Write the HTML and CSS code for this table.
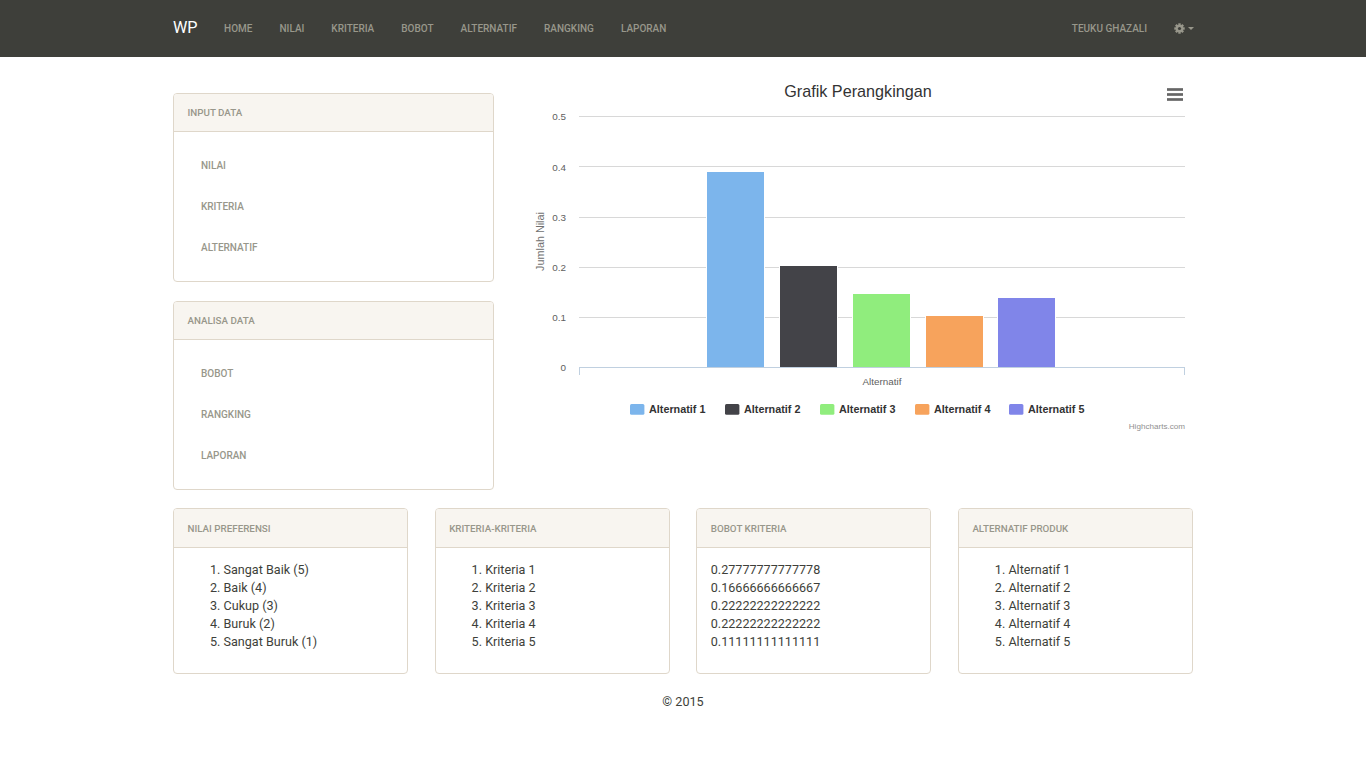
FILE: index.html
```html
<!DOCTYPE html>
<html lang="id">
<head>
<meta charset="utf-8">
<title>WP</title>
<link rel="stylesheet" href="styles.css">
</head>
<body>
<nav class="navbar">
  <div class="navbar-inner">
    <a class="brand" href="#">WP</a>
    <ul class="nav">
      <li><a href="#">Home</a></li>
      <li><a href="#">Nilai</a></li>
      <li><a href="#">Kriteria</a></li>
      <li><a href="#">Bobot</a></li>
      <li><a href="#">Alternatif</a></li>
      <li><a href="#">Rangking</a></li>
      <li><a href="#">Laporan</a></li>
    </ul>
    <ul class="nav nav-right">
      <li><a href="#">Teuku Ghazali</a></li>
      <li><a href="#" class="gear-link"><svg class="gear" width="11" height="11" viewBox="-5.5 -5.5 11 11"><g fill="#98978b"><circle r="3.7"/><rect x="-1.2" y="-5.2" width="2.4" height="10.4"/><rect x="-1.2" y="-5.2" width="2.4" height="10.4" transform="rotate(45)"/><rect x="-1.2" y="-5.2" width="2.4" height="10.4" transform="rotate(90)"/><rect x="-1.2" y="-5.2" width="2.4" height="10.4" transform="rotate(135)"/></g><circle r="1.6" fill="#3e3f3a"/></svg><span class="caret"></span></a></li>
    </ul>
  </div>
</nav>

<div class="main">
  <div class="top-row">
    <div class="sidebar">
      <div class="panel">
        <div class="panel-heading">Input Data</div>
        <div class="side-body">
          <a class="side-link" href="#">Nilai</a>
          <a class="side-link" href="#">Kriteria</a>
          <a class="side-link" href="#">Alternatif</a>
        </div>
      </div>
      <div class="panel panel-last">
        <div class="panel-heading">Analisa Data</div>
        <div class="side-body">
          <a class="side-link" href="#">Bobot</a>
          <a class="side-link" href="#">Rangking</a>
          <a class="side-link" href="#">Laporan</a>
        </div>
      </div>
    </div>
    <div class="chart-col">
      <svg class="chart" width="670" height="360" viewBox="0 0 670 360">
        <text x="335" y="22" text-anchor="middle" class="c-title">Grafik Perangkingan</text>
        <g stroke="#666" stroke-width="2.7">
          <line x1="644" y1="14.5" x2="660" y2="14.5"/>
          <line x1="644" y1="19.5" x2="660" y2="19.5"/>
          <line x1="644" y1="24.5" x2="660" y2="24.5"/>
        </g>
        <g stroke="#d8d8d8" stroke-width="1">
          <line x1="56" y1="41.5" x2="662" y2="41.5"/>
          <line x1="56" y1="91.5" x2="662" y2="91.5"/>
          <line x1="56" y1="142.5" x2="662" y2="142.5"/>
          <line x1="56" y1="192.5" x2="662" y2="192.5"/>
          <line x1="56" y1="242.5" x2="662" y2="242.5"/>
        </g>
        <g class="c-ylab" text-anchor="end">
          <text x="43" y="45">0.5</text>
          <text x="43" y="95.5">0.4</text>
          <text x="43" y="146">0.3</text>
          <text x="43" y="196">0.2</text>
          <text x="43" y="246">0.1</text>
          <text x="43" y="296">0</text>
        </g>
        <text class="c-ytitle" text-anchor="middle" transform="translate(21,166.5) rotate(-90)">Jumlah Nilai</text>
        <g stroke="#fff" stroke-width="1">
          <rect x="183.5" y="96.5" width="58" height="196" fill="#7cb5ec"/>
          <rect x="256.5" y="190.5" width="58" height="102" fill="#434348"/>
          <rect x="329.5" y="218.5" width="58" height="74" fill="#90ed7d"/>
          <rect x="402.5" y="240.5" width="58" height="52" fill="#f7a35c"/>
          <rect x="474.5" y="222.5" width="58" height="70" fill="#8085e9"/>
        </g>
        <g stroke="#c0d0e0" stroke-width="1">
          <line x1="56" y1="292.5" x2="662" y2="292.5"/>
          <line x1="56.5" y1="292.5" x2="56.5" y2="300"/>
          <line x1="661.5" y1="292.5" x2="661.5" y2="300"/>
        </g>
        <text x="359" y="309.5" text-anchor="middle" class="c-xlab">Alternatif</text>
        <g class="c-legend">
          <rect x="107" y="329" width="14.4" height="10.8" rx="1.5" fill="#7cb5ec"/>
          <text x="126" y="338">Alternatif 1</text>
          <rect x="202" y="329" width="14.4" height="10.8" rx="1.5" fill="#434348"/>
          <text x="221" y="338">Alternatif 2</text>
          <rect x="297" y="329" width="14.4" height="10.8" rx="1.5" fill="#90ed7d"/>
          <text x="316" y="338">Alternatif 3</text>
          <rect x="392" y="329" width="14.4" height="10.8" rx="1.5" fill="#f7a35c"/>
          <text x="411" y="338">Alternatif 4</text>
          <rect x="486" y="329" width="14.4" height="10.8" rx="1.5" fill="#8085e9"/>
          <text x="505" y="338">Alternatif 5</text>
        </g>
        <text x="662" y="354" text-anchor="end" class="c-credits">Highcharts.com</text>
      </svg>
    </div>
  </div>

  <div class="bottom-row">
    <div class="panel">
      <div class="panel-heading">Nilai Preferensi</div>
      <div class="list-body">
        <ol>
          <li>Sangat Baik (5)</li>
          <li>Baik (4)</li>
          <li>Cukup (3)</li>
          <li>Buruk (2)</li>
          <li>Sangat Buruk (1)</li>
        </ol>
      </div>
    </div>
    <div class="panel">
      <div class="panel-heading">Kriteria-Kriteria</div>
      <div class="list-body">
        <ol>
          <li>Kriteria 1</li>
          <li>Kriteria 2</li>
          <li>Kriteria 3</li>
          <li>Kriteria 4</li>
          <li>Kriteria 5</li>
        </ol>
      </div>
    </div>
    <div class="panel">
      <div class="panel-heading">Bobot Kriteria</div>
      <div class="list-body">
        <p class="plain">0.27777777777778<br>0.16666666666667<br>0.22222222222222<br>0.22222222222222<br>0.11111111111111</p>
      </div>
    </div>
    <div class="panel">
      <div class="panel-heading">Alternatif Produk</div>
      <div class="list-body">
        <ol>
          <li>Alternatif 1</li>
          <li>Alternatif 2</li>
          <li>Alternatif 3</li>
          <li>Alternatif 4</li>
          <li>Alternatif 5</li>
        </ol>
      </div>
    </div>
  </div>

  <footer class="footer">© 2015</footer>
</div>
</body>
</html>
```

FILE: styles.css
```css
* { box-sizing: border-box; }

body {
  margin: 0;
  font-family: Roboto, "Liberation Sans", Arial, sans-serif;
  font-size: 12.6px;
  line-height: 18px;
  color: #3e3f3a;
  background: #fff;
}

a { text-decoration: none; }

.navbar {
  background: #3e3f3a;
  height: 57px;
}

.navbar-inner {
  width: 1020px;
  height: 100%;
  margin: 0 auto;
  display: flex;
  align-items: flex-start;
}

.brand {
  color: #fff;
  font-size: 16.2px;
  line-height: 55px;
  padding-right: 13px;
}

.nav {
  display: flex;
  list-style: none;
  margin: 0;
  padding: 0;
}

.nav a {
  display: flex;
  align-items: center;
  height: 57px;
  padding: 0 13.5px;
  font-size: 10px;
  font-weight: 500;
  color: #98978b;
  text-transform: uppercase;
}

.nav-right {
  margin-left: auto;
  margin-right: -14.5px;
}

.gear { display: block; }

.caret {
  display: inline-block;
  margin-left: 3px;
  width: 0;
  height: 0;
  border-top: 3px solid #98978b;
  border-left: 3px solid transparent;
  border-right: 3px solid transparent;
}

.main {
  width: 1020px;
  margin: 18px auto 0;
}

.top-row {
  display: grid;
  grid-template-columns: 321px 670px;
  column-gap: 29px;
}

.sidebar { padding-top: 18px; }

.panel {
  border: 1px solid #dfd7ca;
  border-radius: 4px;
  margin-bottom: 19px;
  background: #fff;
}

.panel-last { margin-bottom: 18px; }

.panel-heading {
  background: #f8f5f0;
  border-bottom: 1px solid #dfd7ca;
  border-radius: 3px 3px 0 0;
  padding: 9.5px 13.5px;
  line-height: 18px;
  font-size: 9.8px;
  font-weight: 500;
  color: #98978b;
  text-transform: uppercase;
}

.bottom-row .panel-heading { padding-top: 10.5px; }

.side-body { padding: 13px 13.5px; }

.side-link {
  display: block;
  padding: 12px 13.5px;
  line-height: 17px;
  font-size: 10px;
  font-weight: 500;
  color: #98978b;
  text-transform: uppercase;
}

.chart { display: block; font-family: "Liberation Sans", Arial, sans-serif; }
.c-title { font-size: 16.2px; fill: #333; }
.c-ylab { font-size: 9.9px; fill: #606060; }
.c-xlab { font-size: 9.9px; fill: #606060; }
.c-ytitle { font-size: 10.8px; fill: #707070; }
.c-legend text { font-size: 10.8px; font-weight: bold; fill: #333; }
.c-credits { font-size: 8.1px; fill: #909090; }

.bottom-row {
  display: grid;
  grid-template-columns: repeat(4, 1fr);
  column-gap: 26.5px;
}

.list-body { padding: 13px 13.5px; }

.list-body ol {
  margin: 0 0 9px;
  padding-left: 36px;
}

.plain { margin: 0 0 9px; }

.footer {
  text-align: center;
  line-height: 18px;
  padding-bottom: 40px;
}
```
